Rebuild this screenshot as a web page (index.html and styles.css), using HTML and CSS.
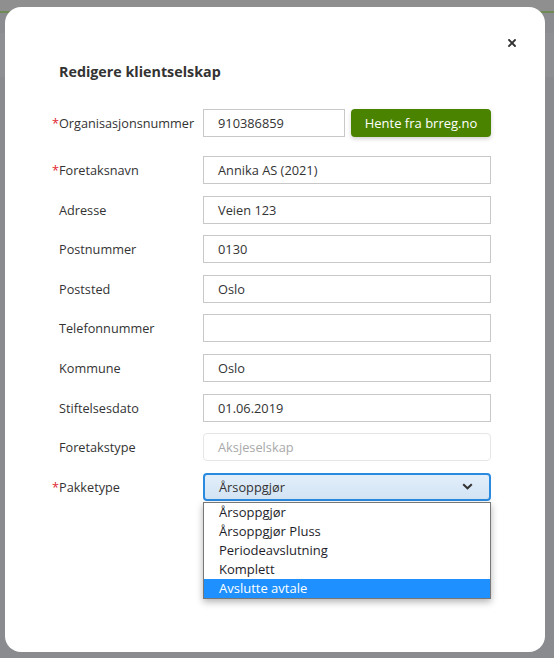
FILE: index.html
```
<!DOCTYPE html>
<html lang="no">
<head>
<meta charset="utf-8">
<title>Redigere klientselskap</title>
<link rel="stylesheet" href="styles.css">
</head>
<body>
<div class="backdrop">
  <div class="modal">
    <button class="close" aria-label="Lukk">
      <svg width="8" height="8" viewBox="0 0 8 8"><path d="M1 1L7 7M7 1L1 7" stroke="#333" stroke-width="1.9" stroke-linecap="square"/></svg>
    </button>
    <h2 class="title">Redigere klientselskap</h2>
    <div class="form">
      <div class="row first">
        <label class="label"><span class="req">*</span>Organisasjonsnummer</label>
        <div class="ctrl split">
          <div class="input short">910386859</div>
          <button class="btn">Hente fra brreg.no</button>
        </div>
      </div>
      <div class="row">
        <label class="label"><span class="req">*</span>Foretaksnavn</label>
        <div class="input">Annika AS (2021)</div>
      </div>
      <div class="row">
        <label class="label">Adresse</label>
        <div class="input">Veien 123</div>
      </div>
      <div class="row">
        <label class="label">Postnummer</label>
        <div class="input">0130</div>
      </div>
      <div class="row">
        <label class="label">Poststed</label>
        <div class="input">Oslo</div>
      </div>
      <div class="row">
        <label class="label">Telefonnummer</label>
        <div class="input"></div>
      </div>
      <div class="row">
        <label class="label">Kommune</label>
        <div class="input">Oslo</div>
      </div>
      <div class="row">
        <label class="label">Stiftelsesdato</label>
        <div class="input">01.06.2019</div>
      </div>
      <div class="row">
        <label class="label">Foretakstype</label>
        <div class="input disabled">Aksjeselskap</div>
      </div>
      <div class="row">
        <label class="label"><span class="req">*</span>Pakketype</label>
        <div class="select-wrap">
          <div class="select">
            <span>Årsoppgjør</span>
            <svg class="chev" width="11" height="7" viewBox="0 0 11 7"><path d="M1.2 1.2L5.5 5.3L9.8 1.2" fill="none" stroke="#333" stroke-width="2"/></svg>
          </div>
          <ul class="options">
            <li>Årsoppgjør</li>
            <li>Årsoppgjør Pluss</li>
            <li>Periodeavslutning</li>
            <li>Komplett</li>
            <li class="active">Avslutte avtale</li>
          </ul>
        </div>
      </div>
    </div>
  </div>
</div>
</body>
</html>
```
FILE: styles.css
```
html, body {
  margin: 0;
  padding: 0;
}
body {
  font-family: "Open Sans", "Noto Sans", sans-serif;
  color: #333;
  background: #8a8c8f;
}
.backdrop {
  width: 554px;
  height: 658px;
  box-sizing: border-box;
  padding: 7px 0 0 5px;
  background:
    linear-gradient(#8f8f8f 0, #8f8f8f 11px, #6f8a55 11px, #6f8a55 13px, #8a8c8f 13px, #8a8c8f 33px, #8d8f92 33px, #8d8f92 77px, #898b8e 77px);
}
.modal {
  position: relative;
  width: 540px;
  height: 645px;
  box-sizing: border-box;
  background: #fff;
  border-radius: 16px;
  padding: 55px 54px 0 54px;
}
.close {
  position: absolute;
  top: 27px;
  right: 25px;
  width: 17px;
  height: 17px;
  padding: 0;
  border: 0;
  background: transparent;
  display: flex;
  align-items: center;
  justify-content: center;
}
.title {
  margin: 0 0 27px 0;
  font-size: 14.3px;
  line-height: 20px;
  font-weight: 700;
  color: #333;
}
.form {
  display: flex;
  flex-direction: column;
}
.row {
  display: grid;
  grid-template-columns: 144px 288px;
  align-items: center;
  height: 28px;
  margin-bottom: 11.6px;
}
.row.first {
  margin-bottom: 19px;
}
.label {
  font-size: 12.7px;
  line-height: 18px;
  color: #333;
}
.req {
  color: #e0242f;
  margin-left: -7px;
  display: inline-block;
  width: 7px;
}
.split {
  display: flex;
  gap: 6px;
  height: 28px;
}
.input {
  box-sizing: border-box;
  height: 28px;
  border: 1px solid #c8c8c8;
  padding: 0 14px;
  font-size: 12.8px;
  line-height: 26px;
  color: #333;
  background: #fff;
}
.input.short {
  width: 142px;
}
.input.disabled {
  border-color: #e6e6e6;
  border-radius: 4px;
  color: #a9a9a9;
}
.btn {
  width: 140px;
  height: 28px;
  border: 0;
  border-radius: 4px;
  background: #4a8300;
  color: #fff;
  font-family: "Open Sans", "Noto Sans", sans-serif;
  font-size: 13px;
  padding: 0;
  box-shadow: 0 2px 4px rgba(0, 0, 0, 0.18);
}
.select-wrap {
  position: relative;
  height: 28px;
}
.select {
  box-sizing: border-box;
  height: 28px;
  border: 2px solid #2a8ae0;
  border-radius: 4px;
  background: linear-gradient(#e2eefa, #d3e4f4);
  display: flex;
  align-items: center;
  justify-content: space-between;
  padding: 0 16px 0 14px;
  font-size: 12.8px;
  color: #333;
}
.chev {
  display: block;
}
.options {
  position: absolute;
  top: 29px;
  left: 0;
  width: 288px;
  box-sizing: border-box;
  margin: 0;
  padding: 0;
  list-style: none;
  background: #fff;
  border: 1px solid #777;
  box-shadow: 0 3px 7px rgba(0, 0, 0, 0.3);
}
.options li {
  height: 19px;
  line-height: 19px;
  padding-left: 15px;
  font-size: 13px;
  color: #1e1e2a;
}
.options li.active {
  background: #1e90ff;
  color: #fff;
}
```
